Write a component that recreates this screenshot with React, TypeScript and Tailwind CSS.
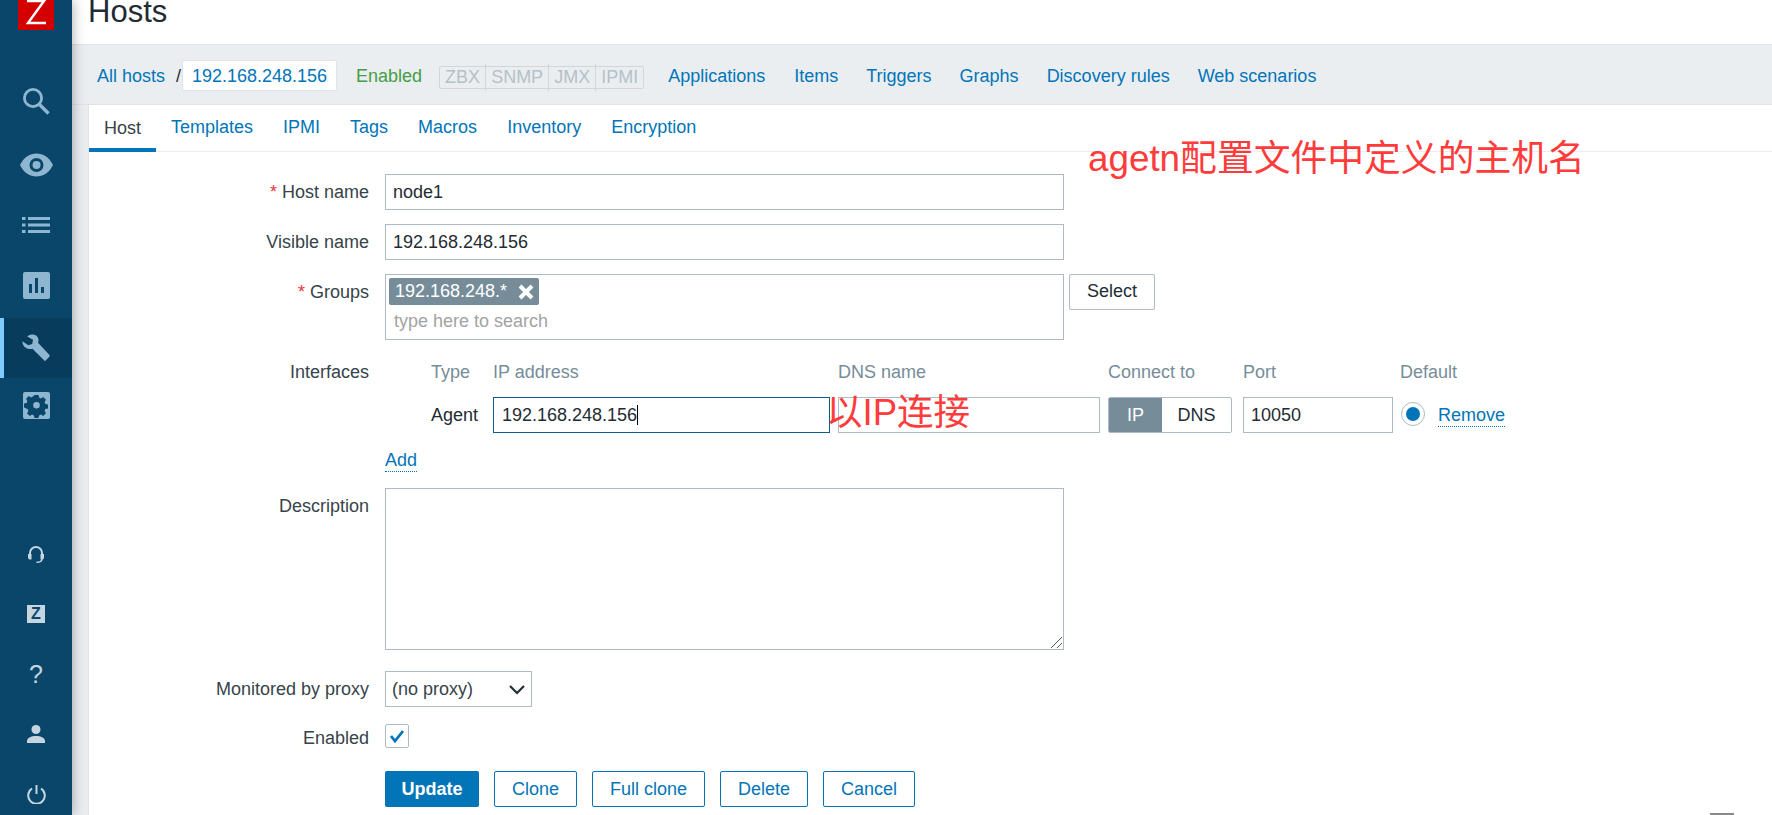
import React from "react"

const font = { fontFamily: '"Liberation Sans", Arial, sans-serif' }

function SideIcon({ children, className = "" }: { children: React.ReactNode; className?: string }) {
  return <div className={`flex w-[72px] shrink-0 items-center justify-center ${className}`}>{children}</div>
}

function Sidebar() {
  return (
    <div className="relative z-10 flex h-[815px] w-[72px] shrink-0 flex-col overflow-hidden bg-[#0a466a] shadow-[0_0_12px_rgba(0,0,0,0.35)]">
      {/* logo */}
      <div className="mx-auto flex h-[30px] w-[36px] shrink-0 items-start justify-center bg-[#d40000]">
        <svg width="28" height="26" viewBox="0 0 28 26">
          <path d="M5 1h17L6 23h18" fill="none" stroke="#fff" strokeWidth="2.4" />
        </svg>
      </div>

      <SideIcon className="mt-[41px] h-[60px]">
        <svg width="28" height="28" viewBox="0 0 28 28" fill="none" stroke="#8fb6d0" strokeWidth="2.8">
          <circle cx="11" cy="11" r="8.6" />
          <path d="M17 17l9.5 9.5" strokeWidth="3.4" />
        </svg>
      </SideIcon>
      <SideIcon className="mt-[4px] h-[60px]">
        <svg width="33" height="24" viewBox="0 0 33 24">
          <path fillRule="evenodd" fill="#8fb6d0" d="M0 12C4 4 10 .5 16.500 .5S29 4 33 12c-4 8-10 11.500-16.500 11.500S4 20 0 12zM16.500 5a7 7 0 100 14 7 7 0 000-14zm0 3a4 4 0 110 8 4 4 0 010-8z" />
        </svg>
      </SideIcon>
      <SideIcon className="h-[60px]">
        <svg width="28" height="16" viewBox="0 0 28 16" fill="#8fb6d0">
          <rect x="0" y="0" width="3.500" height="3" />
          <rect x="6" y="0" width="22" height="3" />
          <rect x="0" y="6.500" width="3.500" height="3" />
          <rect x="6" y="6.500" width="22" height="3" />
          <rect x="0" y="13" width="3.500" height="3" />
          <rect x="6" y="13" width="22" height="3" />
        </svg>
      </SideIcon>
      <SideIcon className="h-[63px] pb-[3px]">
        <svg width="27" height="27" viewBox="0 0 27 27">
          <rect width="27" height="27" rx="2" fill="#8fb6d0" />
          <path d="M6 12h3v9H6zM12 6h3v15h-3zM18 15h3v6h-3z" fill="#0a466a" />
        </svg>
      </SideIcon>
      <SideIcon className="h-[60px] border-l-4 border-[#80ccff] bg-[#083c5c]">
        <svg className="-ml-1" width="28" height="28" viewBox="0 0 28 28">
          <path fill="#8fb6d0" d="M10 .5c3.500-.5 7 2.500 6.500 6.500-.1.700-.3 1.300-.5 1.800L27.500 21c.4.400.4 1 0 1.400l-3.800 4.200c-.4.400-1 .4-1.400 0L10.500 14.700c-3.800 1.300-8 -.6-9.500-4.200-.4-1-.6-2.300-.5-3.200l5.700 4 4-1.300.8-4.200L5.200 2.500C6.500 1.300 8.300.7 10 .5z" />
        </svg>
      </SideIcon>
      <SideIcon className="mt-[14px] h-[27px]">
        <svg width="27" height="27" viewBox="0 0 27 27">
          <rect width="27" height="27" rx="2" fill="#8fb6d0" />
          <path fillRule="evenodd" fill="#0a466a" d="M11.500 4h4l.6 2.600 1.800.8 2.300-1.400 2.800 2.800-1.400 2.300.8 1.900 2.600.5v4l-2.600.6-.8 1.800 1.400 2.300-2.800 2.800-2.300-1.400-1.800.8-.6 2.600h-4l-.6-2.600-1.800-.8-2.300 1.400-2.800-2.800 1.400-2.300-.8-1.800L1 16.500v-4l2.600-.5.800-1.900L3 7.800 5.800 5l2.300 1.400 1.800-.8zM13.500 11a3.300 3.300 0 100 6.600 3.300 3.300 0 000-6.600z" transform="translate(0 -1)" />
        </svg>
      </SideIcon>

      <SideIcon className="mt-[105px] h-[60px]">
        <svg width="16" height="18" viewBox="0 0 16 18" fill="none">
          <path d="M2 10V8a6 6 0 0112 0v2" stroke="#c5d6e0" strokeWidth="2" />
          <path d="M0 9h3.500v5.500H2a2 2 0 01-2-2zM16 9h-3.500v5.500H14a2 2 0 002-2z" fill="#c5d6e0" />
          <path d="M14 14c0 2-2 3.300-5.500 3.300" stroke="#c5d6e0" strokeWidth="1.500" />
        </svg>
      </SideIcon>
      <SideIcon className="h-[60px]">
        <div className="flex h-[18px] w-[18px] items-center justify-center bg-[#c5d6e0] text-[16px] leading-none font-bold text-[#0a466a]">Z</div>
      </SideIcon>
      <SideIcon className="h-[60px]">
        <span className="text-[25px] leading-none text-[#c5d6e0]">?</span>
      </SideIcon>
      <SideIcon className="h-[60px]">
        <svg width="18" height="18" viewBox="0 0 18 18" fill="#c5d6e0">
          <circle cx="9" cy="4.500" r="4.500" />
          <path d="M0 18v-2c0-3 4-5 9-5s9 2 9 5v2z" />
        </svg>
      </SideIcon>
      <SideIcon className="h-[60px]">
        <svg width="19" height="19" viewBox="0 0 19 19" fill="none" stroke="#c5d6e0" strokeWidth="2">
          <path d="M5 3.500a8.300 8.300 0 109 0" />
          <path d="M9.500 0v9" />
        </svg>
      </SideIcon>
    </div>
  )
}

function Input({ value, className = "" }: { value: string; className?: string }) {
  return (
    <div className={`flex h-9 shrink-0 items-center border border-[#acbbc7] bg-white pr-2 pl-[7px] text-[#1f2c33] ${className}`}>{value}</div>
  )
}

function Row({ label, required, children }: { label: string; required?: boolean; children: React.ReactNode }) {
  return (
    <div className="mb-[14px] flex items-start gap-4">
      <div className="flex h-9 w-[280px] shrink-0 items-center justify-end text-[#36434a]">
        {required && <span className="mr-[5px] text-[#e33734]">*</span>}
        {label}
      </div>
      {children}
    </div>
  )
}

function OutlineButton({ label, className = "" }: { label: string; className?: string }) {
  return (
    <div className={`flex h-9 items-center justify-center rounded-[2px] border border-[#0275b8] text-[#0275b8] ${className}`}>
      {label}
    </div>
  )
}

const navLinks = [
  ["Applications", "ml-[24px]"],
  ["Items", "ml-[29px]"],
  ["Triggers", "ml-[28px]"],
  ["Graphs", "ml-[28px]"],
  ["Discovery rules", "ml-[28px]"],
  ["Web scenarios", "ml-[28px]"],
]

const tabs = ["Templates", "IPMI", "Tags", "Macros", "Inventory", "Encryption"]

export default function App() {
  return (
    <div className="relative flex h-[815px] w-[1772px] overflow-hidden bg-white text-[18px]" style={font}>
      <Sidebar />
      <div className="flex min-w-0 flex-1 flex-col">
        <div className="flex h-[44px] items-end pl-4">
          <h1 className="mb-[17px] text-[31px] leading-none font-normal text-[#1f2c33]">Hosts</h1>
        </div>

        <div className="flex h-[61px] items-center border-y border-[#dfe4e7] bg-[#ebeef0] pt-[2px] pl-[25px]">
          <span className="translate-y-px text-[#0275b8]">All hosts</span>
          <span className="ml-[11px] translate-y-px text-[#1f2c33]">/</span>
          <span className="ml-[1px] flex h-[31px] w-[155px] items-center justify-center rounded-[2px] border border-[#dfe4e7] bg-white pt-[2px] text-[#0275b8]">
            192.168.248.156
          </span>
          <span className="ml-[19px] translate-y-px text-[#429e47]">Enabled</span>
          <div className="mt-[3px] ml-[17px] flex h-[23px] items-center rounded-[2px] border border-[#d0d7dc] text-[#b5c1c9]">
            <span className="border-r border-[#d0d7dc] px-[5px]">ZBX</span>
            <span className="border-r border-[#d0d7dc] px-[5px]">SNMP</span>
            <span className="border-r border-[#d0d7dc] px-[5px]">JMX</span>
            <span className="px-[5px]">IPMI</span>
          </div>
          {navLinks.map(([name, ml]) => (
            <span key={name} className={`translate-y-px text-[#0275b8] ${ml}`}>{name}</span>
          ))}
        </div>

        <div className="flex flex-1 bg-[#ebeef0] pl-4">
          <div className="flex-1 border-l border-[#dfe4e7] bg-white">
            <div className="flex h-[47px] border-b border-[#ebeef0] pb-[2px]">
              <div className="-mb-[3px] flex items-center border-b-4 border-[#0275b8] px-[15px] pt-[3px] text-[#36434a]">Host</div>
              {tabs.map((t) => (
                <div key={t} className="flex items-center px-[15px] text-[#0275b8]">{t}</div>
              ))}
            </div>

            <div className="pt-[22px]">
              <Row label="Host name" required>
                <Input value="node1" className="w-[679px]" />
              </Row>
              <Row label="Visible name">
                <Input value="192.168.248.156" className="w-[679px]" />
              </Row>
              <Row label="Groups" required>
                <div className="h-[66px] w-[679px] border border-[#acbbc7] px-[3px] pt-[3px]">
                  <div className="flex h-[27px] w-[150px] items-center justify-between rounded-[2px] bg-[#768d99] pr-[5px] pl-[6px] text-white">
                    <span>192.168.248.*</span>
                    <svg width="16" height="16" viewBox="0 0 16 16" stroke="#fff" strokeWidth="4">
                      <path d="M2 2l12 12M14 2L2 14" />
                    </svg>
                  </div>
                  <div className="mt-[3px] pl-[5px] text-[#a3a3a3]">type here to search</div>
                </div>
                <OutlineButton label="Select" className="-ml-[11px] w-[86px] border-[#acbbc7] pb-[2px] !text-[#1f2c33]" />
              </Row>

              <div className="mb-[15px] flex items-start gap-4">
                <div className="flex h-9 w-[280px] shrink-0 items-center justify-end text-[#36434a]">Interfaces</div>
                <div className="w-[1200px] shrink-0 pl-[46px]">
                  <div className="flex h-9 items-center text-[#768d99]">
                    <span className="w-[62px] shrink-0">Type</span>
                    <span className="w-[345px] shrink-0">IP address</span>
                    <span className="w-[270px] shrink-0">DNS name</span>
                    <span className="w-[135px] shrink-0">Connect to</span>
                    <span className="w-[157px] shrink-0">Port</span>
                    <span>Default</span>
                  </div>
                  <div className="mt-[7px] flex h-9 items-center">
                    <span className="w-[62px] shrink-0 text-[#1f2c33]">Agent</span>
                    <div className="flex h-9 w-[337px] shrink-0 items-center border border-[#0a5f92] px-2 text-[#1f2c33]">
                      192.168.248.156<span className="h-[20px] w-px bg-black" />
                    </div>
                    <div className="ml-[8px] h-9 w-[262px] shrink-0 border border-[#acbbc7]" />
                    <div className="ml-[8px] flex h-9 w-[124px] shrink-0 overflow-hidden rounded-[2px] border border-[#acbbc7]">
                      <span className="flex w-[53px] items-center justify-center bg-[#768d99] text-white">IP</span>
                      <span className="flex flex-1 items-center justify-center text-[#1f2c33]">DNS</span>
                    </div>
                    <Input value="10050" className="ml-[11px] w-[150px]" />
                    <div className="ml-[8px] flex h-[24px] w-[24px] shrink-0 -translate-y-px items-center justify-center rounded-full border border-[#acbbc7]">
                      <div className="h-[14px] w-[14px] rounded-full bg-[#0275b8]" />
                    </div>
                    <span className="ml-[13px] border-b border-dotted border-[#0275b8] leading-[22px] text-[#0275b8]">Remove</span>
                  </div>
                </div>
              </div>

              <div className="mb-[16px] ml-[296px] flex h-[24px] items-center">
                <span className="border-b border-dotted border-[#0275b8] leading-[22px] text-[#0275b8]">Add</span>
              </div>

              <Row label="Description">
                <div className="relative h-[162px] w-[679px] border border-[#acbbc7]">
                  <svg className="absolute right-0 bottom-0" width="14" height="14" viewBox="0 0 14 14" stroke="#555" strokeWidth="1">
                    <path d="M13 2L2 13M13 8l-5 5" />
                  </svg>
                </div>
              </Row>
              <div className="pt-[7px]">
                <Row label="Monitored by proxy">
                  <div className="flex h-9 w-[147px] items-center justify-between border border-[#acbbc7] pr-[5px] pl-[6px] text-[#36434a]">
                    (no proxy)
                    <svg width="18" height="11" viewBox="0 0 18 11" fill="none" stroke="#1f2c33" strokeWidth="2.200">
                      <path d="M2 2l7 7 7-7" />
                    </svg>
                  </div>
                </Row>
              </div>
              <div className="mt-[17px] mb-[23px] flex h-[24px] items-center gap-4">
                <div className="w-[280px] shrink-0 pt-[4px] text-right leading-none text-[#36434a]">Enabled</div>
                <div className="flex h-[24px] w-[24px] items-center justify-center rounded-[2px] border border-[#acbbc7]">
                  <svg width="16" height="14" viewBox="0 0 16 14" fill="none" stroke="#0275b8" strokeWidth="2.800">
                    <path d="M2 7l4 5 8-10" />
                  </svg>
                </div>
              </div>
              <div className="ml-[296px] flex gap-[15px]">
                <div className="flex h-9 w-[94px] items-center justify-center rounded-[2px] bg-[#0275b8] font-bold text-white">Update</div>
                <OutlineButton label="Clone" className="w-[83px]" />
                <OutlineButton label="Full clone" className="w-[113px]" />
                <OutlineButton label="Delete" className="w-[88px]" />
                <OutlineButton label="Cancel" className="w-[92px]" />
              </div>
            </div>
          </div>
        </div>
      </div>

      {/* red annotations pasted over the form */}
      <div
        className="absolute top-[135px] left-[1088px] text-[36.800px] leading-[48px] whitespace-nowrap text-[#ff3b3b]"
        style={{ fontFamily: '"Liberation Sans", "Noto Sans CJK SC", sans-serif' }}
      >
        agetn配置文件中定义的主机名
      </div>
      <div
        className="absolute top-[389px] left-[826px] text-[36.500px] leading-[48px] whitespace-nowrap text-[#ff3b3b]"
        style={{ fontFamily: '"Liberation Sans", "Noto Sans CJK SC", sans-serif' }}
      >
        以IP连接
      </div>
      {/* bit of a cropped widget in the bottom corner */}
      <div className="absolute top-[813px] left-[1710px] h-[2px] w-[24px] bg-[#888]" />
    </div>
  )
}
